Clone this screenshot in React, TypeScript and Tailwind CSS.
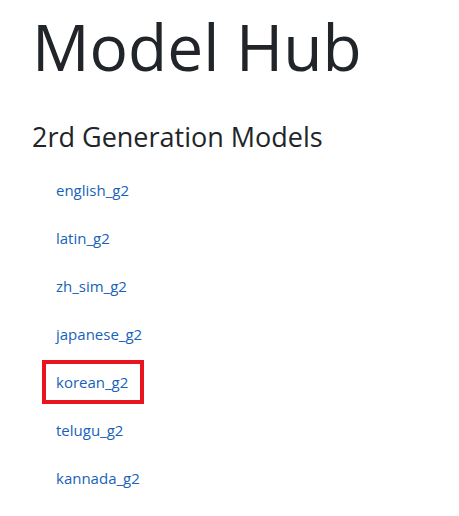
import React from 'react';

const models = ['english_g2', 'latin_g2', 'zh_sim_g2', 'japanese_g2', 'korean_g2', 'telugu_g2', 'kannada_g2'];

const App: React.FC = () => {
    return (
        <div className="min-h-screen bg-white px-8 text-[#212529]" style={{ fontFamily: '"Open Sans", "Noto Sans", sans-serif' }}>
            <h1 className="pt-[9px] text-[64px] font-normal leading-[1.2]">Model Hub</h1>
            <h2 className="mt-[35px] text-[27px] font-medium leading-[1.2]">2rd Generation Models</h2>
            <ul className="mt-[25px] pl-6">
                {models.map((m) => (
                    <li key={m} className="h-12 text-[15px] leading-[24px]">
                        {m === 'korean_g2' ? (
                            <a href="#" className="-mx-[14px] -my-[10px] inline-block border-4 border-[#e8141f] pl-[10px] pr-[12px] py-[6px] text-[#1762b8]">
                                {m}
                            </a>
                        ) : (
                            <a href="#" className="text-[#1762b8]">{m}</a>
                        )}
                    </li>
                ))}
            </ul>
        </div>
    );
};

export default App;
